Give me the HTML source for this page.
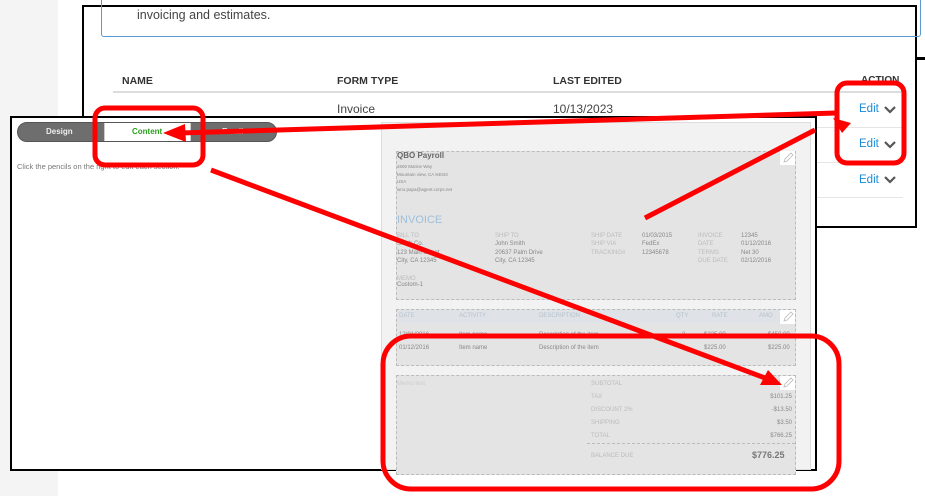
<!DOCTYPE html>
<html><head><style>
*{margin:0;padding:0;box-sizing:border-box}
body{width:925px;height:496px;position:relative;overflow:hidden;background:#fff;font-family:"Liberation Sans",sans-serif}
.a{position:absolute}
.t{position:absolute;white-space:nowrap}
.s{font-size:6px;color:#bbb}
.d{font-size:6px;color:#888}
</style></head><body>
<div class="a" style="left:0;top:0;width:58px;height:496px;background:#f4f4f4"></div>
<div class="a" style="left:82px;top:5px;width:835px;height:223px;border:2px solid #000;background:#fff"></div>
<div class="a" style="left:916px;top:57px;width:9px;height:3px;background:#000"></div>
<div class="a" style="left:101px;top:-10px;width:820px;height:47px;border:1px solid #5a9ad0;border-radius:3px"></div>
<div class="t" style="left:137px;top:8px;font-size:12.5px;color:#444">invoicing and estimates.</div>
<div class="t" style="left:122px;top:75px;font-size:10.5px;font-weight:bold;color:#333">NAME</div>
<div class="t" style="left:337px;top:75px;font-size:10.5px;font-weight:bold;color:#333">FORM TYPE</div>
<div class="t" style="left:553px;top:75px;font-size:10.5px;font-weight:bold;color:#333">LAST EDITED</div>
<div class="t" style="left:861px;top:75px;font-size:10px;font-weight:bold;color:#333">ACTION</div>
<div class="a" style="left:113px;top:91px;width:790px;height:2px;background:#ddd"></div>
<div class="t" style="left:337px;top:102px;font-size:12px;color:#444">Invoice</div>
<div class="t" style="left:553px;top:102px;font-size:12px;color:#444">10/13/2023</div>
<div class="a" style="left:113px;top:127px;width:790px;height:1px;background:#e5e5e5"></div>
<div class="a" style="left:113px;top:162px;width:790px;height:1px;background:#e5e5e5"></div>
<div class="a" style="left:113px;top:197px;width:790px;height:1px;background:#e5e5e5"></div>
<div class="t" style="left:859px;top:103px;font-size:11.5px;color:#1b8ad6">Edit</div>
<div class="t" style="left:859px;top:138px;font-size:11.5px;color:#1b8ad6">Edit</div>
<div class="t" style="left:859px;top:174px;font-size:11.5px;color:#1b8ad6">Edit</div>
<svg class="a" style="left:883px;top:104px" width="14" height="90"><g fill="none" stroke="#555" stroke-width="2.2"><path d="M2 3l5 5 5-5"/><path d="M2 38l5 5 5-5"/><path d="M2 73l5 5 5-5"/></g></svg>
<div class="a" style="left:10px;top:116px;width:807px;height:355px;border:2px solid #000;background:#fff"></div>
<div class="a" style="left:17px;top:122px;width:260px;height:20px;border:1px solid #555;border-radius:10px;background:#6e6e6e;overflow:hidden">
 <div class="a" style="left:86px;top:0;width:87px;height:20px;background:#fff;border-left:1px solid #ccc;border-right:1px solid #ccc"></div>
</div>
<div class="t" style="left:46px;top:127px;font-size:8px;font-weight:bold;color:#eee">Design</div>
<div class="t" style="left:132px;top:127px;font-size:8px;font-weight:bold;color:#2ca01c">Content</div>
<div class="t" style="left:222px;top:127px;font-size:8px;font-weight:bold;color:#eee">Email</div>
<div class="t" style="left:17px;top:162px;font-size:7.5px;color:#777">Click the pencils on the right to edit each section.</div>
<div class="a" style="left:381px;top:122px;width:430px;height:348px;background:#f2f2f2;border:1px solid #ddd"></div>
<div class="a" style="left:396px;top:151px;width:400px;height:149px;background:#e4e4e4;border:1px dashed #bbb"></div>
<div class="t" style="left:397px;top:151px;font-size:8px;font-weight:bold;color:#666">QBO Payroll</div>
<div class="t s" style="left:397px;top:163px;font-size:4.5px;color:#888;line-height:7.5px">2600 Marine Way<br>Mountain view, CA 94043<br>USA<br>wno.papa@agent.corps.net</div>
<div class="t" style="left:397px;top:214px;font-size:11px;color:#9fc0dc">INVOICE</div>
<div class="t s" style="left:397px;top:232px;line-height:8.3px">BILL TO<br><span style="color:#888">Smith Co.<br>123 Main Street<br>City, CA 12345</span></div>
<div class="t s" style="left:495px;top:232px;line-height:8.3px">SHIP TO<br><span style="color:#888">John Smith<br>20637 Palm Drive<br>City, CA 12345</span></div>
<div class="t s" style="left:591px;top:232px;line-height:8.3px">SHIP DATE<br>SHIP VIA<br>TRACKING#</div>
<div class="t d" style="left:642px;top:232px;line-height:8.3px">01/03/2015<br>FedEx<br>12345678</div>
<div class="t s" style="left:698px;top:232px;line-height:8.3px">INVOICE<br>DATE<br>TERMS<br>DUE DATE</div>
<div class="t d" style="left:741px;top:232px;line-height:8.3px">12345<br>01/12/2016<br>Net 30<br>02/12/2016</div>
<div class="t s" style="left:397px;top:276px;line-height:6px">MEMO<br><span style="color:#888">Custom-1</span></div>
<div class="a" style="left:396px;top:309px;width:400px;height:57px;background:#e4e4e4;border:1px dashed #bbb"></div>
<div class="a" style="left:397px;top:310px;width:398px;height:13px;background:#dfe2e6"></div>
<div class="t s" style="left:399px;top:313px;color:#b5c2cf">DATE</div>
<div class="t s" style="left:459px;top:313px;color:#b5c2cf">ACTIVITY</div>
<div class="t s" style="left:539px;top:313px;color:#b5c2cf">DESCRIPTION</div>
<div class="t s" style="left:676px;top:313px;color:#b5c2cf">QTY</div>
<div class="t s" style="left:712px;top:313px;color:#b5c2cf">RATE</div>
<div class="t s" style="left:759px;top:313px;color:#b5c2cf">AMO</div>
<div class="t d" style="left:399px;top:329px;line-height:13px">12/01/2016<br>01/12/2016</div>
<div class="t d" style="left:459px;top:329px;line-height:13px">Item name<br>Item name</div>
<div class="t d" style="left:539px;top:329px;line-height:13px">Description of the item<br>Description of the item</div>
<div class="t d" style="left:682px;top:329px;line-height:13px">2<br>1</div>
<div class="t d" style="left:704px;top:329px;line-height:13px">$225.00<br>$225.00</div>
<div class="t d" style="left:768px;top:329px;line-height:13px">$450.00<br>$225.00</div>
<div class="a" style="left:396px;top:375px;width:400px;height:100px;background:#e4e4e4;border:1px dashed #bbb"></div>
<div class="t s" style="left:397px;top:381px;color:#ccc">Memo text</div>
<div class="t s" style="left:591px;top:378px;line-height:13px">SUBTOTAL<br>TAX<br>DISCOUNT 2%<br>SHIPPING<br>TOTAL</div>
<div class="t d" style="left:742px;top:378px;line-height:13px;text-align:right;width:50px">$675<br>$101.25<br>-$13.50<br>$3.50<br>$766.25</div>
<div class="a" style="left:587px;top:443px;width:208px;border-top:1px dashed #bbb"></div>
<div class="t s" style="left:591px;top:453px">BALANCE DUE</div>
<div class="t" style="left:752px;top:450px;font-size:9px;font-weight:bold;color:#777">$776.25</div>
<svg class="a" style="left:0;top:0" width="925" height="496">
<g fill="#fff"><rect x="780" y="151" width="15" height="14"/><rect x="780" y="310" width="15" height="14"/><rect x="780" y="376" width="15" height="14"/></g>
<g fill="none" stroke="#bbb" stroke-width="0.8"><path d="M784 162l1-3 6-6 2 2-6 6z"/><path d="M784 321l1-3 6-6 2 2-6 6z"/><path d="M784 387l1-3 6-6 2 2-6 6z"/></g>
<g fill="none" stroke="#f00" stroke-width="5">
<rect x="95" y="108" width="108" height="57" rx="10"/>
<rect x="837" y="83" width="67" height="80" rx="10"/>
<rect x="383" y="336" width="456" height="153" rx="28"/>
<line x1="836" y1="113" x2="180" y2="133"/>
<line x1="211" y1="170" x2="765" y2="378"/>
<line x1="645" y1="218" x2="815" y2="130"/>
</g>
<g fill="#f00">
<polygon points="163,133 185,124 186,142"/>
<polygon points="782,385 760,385 768,370"/>
<polygon points="851,123 842,133 833,118"/>
</g>
</svg>
</body></html>
